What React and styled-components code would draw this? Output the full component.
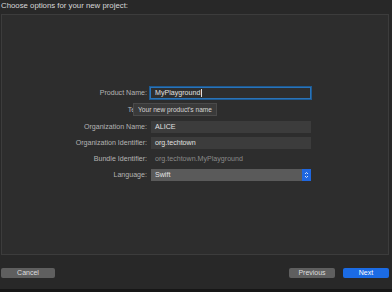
import styled, { createGlobalStyle } from 'styled-components';

const Global = createGlobalStyle`
  html, body { margin: 0; padding: 0; }
  body {
    background: #282828;
    font-family: "Liberation Sans", Arial, sans-serif;
    -webkit-font-smoothing: antialiased;
  }
`;

const Window = styled.div`
  width: 392px;
  height: 292px;
  display: flex;
  flex-direction: column;
  background: #282828;
  overflow: hidden;
`;

const Title = styled.div`
  height: 14px;
  padding-left: 1px;
  font-size: 7.8px;
  line-height: 11px;
  color: #d8d8d8;
`;

const Panel = styled.div`
  margin: 0 3px 0 1px;
  height: 241px;
  border: 1px solid #3c3c3c;
  background: #2d2d2d;
  padding-top: 72px;
  box-sizing: border-box;
`;

const Form = styled.div`
  display: grid;
  grid-template-columns: 145px 161px;
  column-gap: 3px;
  row-gap: 4px;
  align-items: center;
`;

const Label = styled.div`
  text-align: right;
  font-size: 7.1px;
  color: #b4b4b4;
  line-height: 12px;
  white-space: nowrap;
`;

const Field = styled.div`
  height: 12px;
  box-sizing: border-box;
  padding-left: 4px;
  font-size: 7.1px;
  line-height: ${p => (p.$focus ? '10px' : '12px')};
  color: ${p => (p.$muted ? '#8a8a8a' : '#e0e0e0')};
  background: ${p => (p.$muted ? 'transparent' : p.$focus ? '#2e2e2e' : '#3c3c3c')};
  border: ${p => (p.$focus ? '1px solid #2a73b8' : 'none')};
  box-shadow: ${p => (p.$focus ? '0 0 0 1px #1d5a92' : 'none')};
  margin-left: ${p => (p.$focus ? '0' : '1px')};
`;

const Caret = styled.span`
  display: inline-block;
  width: 1px;
  height: 8px;
  background: #e0e0e0;
  vertical-align: middle;
  margin-left: 0.5px;
`;

const TeamCell = styled.div`
  position: relative;
  height: 14px;
`;

const Tooltip = styled.div`
  position: absolute;
  left: -17px;
  top: 0;
  height: 11px;
  padding: 0 4px;
  background: #3a3a3a;
  border: 1px solid #4a4a4a;
  font-size: 6.6px;
  line-height: 11px;
  color: #d4d4d4;
  white-space: nowrap;
`;

const Popup = styled.div`
  height: 12px;
  margin-left: 1px;
  display: flex;
  background: #5a5a5a;
  font-size: 7.1px;
  line-height: 12px;
  color: #e4e4e4;
`;

const PopupText = styled.div`
  flex: 1;
  padding-left: 4px;
`;

const Stepper = styled.div`
  width: 9px;
  background: #1f67e0;
  display: flex;
  align-items: center;
  justify-content: center;
`;

const Footer = styled.div`
  flex: 1;
  display: flex;
  align-items: flex-start;
  padding: 13px 3px 0 1px;
  gap: 8px;
  border-bottom: 3px solid #161616;
`;

const Button = styled.div`
  width: ${p => p.$w}px;
  height: 10px;
  border-radius: 2px;
  background: ${p => (p.$primary ? '#1b6be4' : '#5f5f5f')};
  color: ${p => (p.$primary ? '#ffffff' : '#dedede')};
  font-size: 7px;
  line-height: 10px;
  text-align: center;
`;

const Spacer = styled.div`
  flex: 1;
`;

export default function App() {
  return (
    <Window>
      <Global />
      <Title>Choose options for your new project:</Title>
      <Panel>
        <Form>
          <Label>Product Name:</Label>
          <Field $focus>MyPlayground<Caret /></Field>
          <Label>Team:</Label>
          <TeamCell>
            <Tooltip>Your new product's name</Tooltip>
          </TeamCell>
          <Label>Organization Name:</Label>
          <Field>ALICE</Field>
          <Label>Organization Identifier:</Label>
          <Field>org.techtown</Field>
          <Label>Bundle Identifier:</Label>
          <Field $muted>org.techtown.MyPlayground</Field>
          <Label>Language:</Label>
          <Popup>
            <PopupText>Swift</PopupText>
            <Stepper>
              <svg width="5" height="8" viewBox="0 0 5 8">
                <path d="M1 3 L2.5 1.5 L4 3 M1 5 L2.5 6.5 L4 5" stroke="#fff" strokeWidth="0.8" fill="none" />
              </svg>
            </Stepper>
          </Popup>
        </Form>
      </Panel>
      <Footer>
        <Button $w={54}>Cancel</Button>
        <Spacer />
        <Button $w={46}>Previous</Button>
        <Button $w={46} $primary>Next</Button>
      </Footer>
    </Window>
  );
}
